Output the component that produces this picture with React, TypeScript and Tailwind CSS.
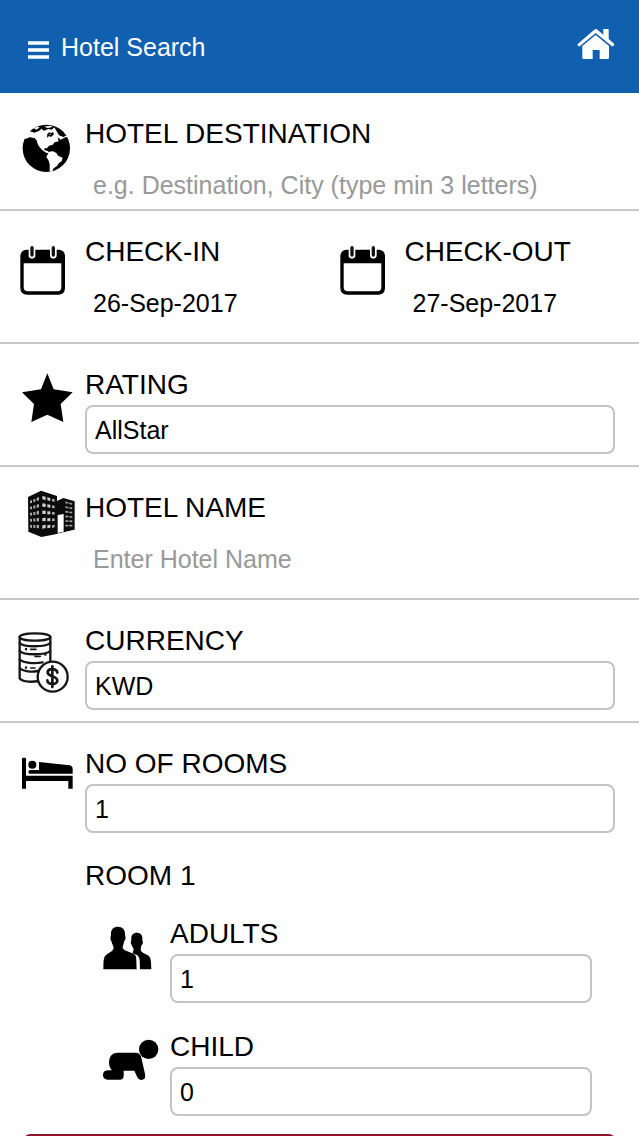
import { useState } from "react";
import type { ReactNode } from "react";

const labelClass = "block text-[28px] leading-[34px] text-black";
const plainInput =
  "mt-[10px] block h-12 w-full min-w-0 bg-transparent px-2 text-[25px] text-black outline-none placeholder:text-[#999999]";
const selectClass =
  "mt-[3px] block h-[49px] w-full appearance-none rounded-lg border-2 border-[#c4c4c8] bg-white px-2 pt-[2px] text-[25px] text-black outline-none";

function Icon({ viewBox, children }: { viewBox: string; children: ReactNode }) {
  return (
    <svg viewBox={viewBox} className="h-16 w-[60px] shrink-0 overflow-visible" aria-hidden="true">
      {children}
    </svg>
  );
}

function GlobeIcon() {
  return (
    <Icon viewBox="48 21 180 192">
      <circle cx="139" cy="115" r="71" fill="#000" />
      <g fill="#fefefe">
        <path d="M66 88L74 66L91 64L103 68L118 62L124 56L132 62L145 57L155 59L163 52L170 64L177 76L190 81L202 76L194 60L176 44L210 44L214 92L203 80L193 83L182 89L173 82L176 94L164 97L157 105L147 107L141 115L135 114L132 120L143 123L149 128L140 129L129 122L119 112L113 102L110 91L103 84L89 82L78 86Z" />
        <path d="M147 125L159 124L169 129L174 137L188 143L185 154L177 159L171 168L161 175L155 187L149 184L149 162L145 150L139 141Z" />
        <path d="M101 55L113 50L119 52L110 59Z" />
        <path d="M132 50L151 47L158 51L143 54Z" />
      </g>
      <path d="M142 72L148 67L154 70L158 65L162 73L153 81L147 78L141 83Z" fill="#000" />
      <path d="M148 72L153 72L149 76Z" fill="#fefefe" />
    </Icon>
  );
}

function CalendarIcon() {
  return (
    <Icon viewBox="48 15 180 192">
      <path
        fillRule="evenodd"
        d="M78 59H178Q195 62 195 79V173Q195 194 174 194H82Q61 194 61 173V79Q61 62 78 59ZM71 100V172Q71 184 84 184H172Q184 184 184 172V100Z"
      />
      {[96, 160].map((x) => (
        <g key={x} strokeLinecap="round">
          <path d={`M${x} 53V76`} stroke="#fefefe" strokeWidth="20" />
          <path d={`M${x} 53V75`} stroke="#111" strokeWidth="10" />
        </g>
      ))}
    </Icon>
  );
}

function StarIcon() {
  return (
    <Icon viewBox="48 24 180 192">
      <path d="M142 40L161 88L218 97L182 132L190 186L142 164L94 186L102 132L66 97L123 88Z" />
    </Icon>
  );
}

function BuildingIcon() {
  const rows = [0, 1, 2, 3, 4];
  return (
    <Icon viewBox="48 33 180 192">
      <path d="M84 51L123 32L171 48V63L190 54L224 64V149L170 162L124 171L85 155Z" fill="#0b0b0b" />
      <path d="M173 105L191 102V155L173 159Z" fill="#fefefe" />
      <path d="M170 162L224 149V154L170 166Z" fill="#fefefe" />
      {rows.map((r) => (
        <g key={r} fill="#a8a8a8">
          <path d={`M90 ${62 + r * 18}L96 ${60 + r * 19}V${69 + r * 19}L90 ${70 + r * 18}Z`} />
          <path d={`M100 ${58 + r * 19}L106 ${56 + r * 20}V${65 + r * 20}L100 ${67 + r * 19}Z`} />
          <path d={`M110 ${54 + r * 20}L117 ${51 + r * 21}V${61 + r * 21}L110 ${64 + r * 20}Z`} />
          <path d={`M127 ${48 + r * 22}L137 ${50 + r * 21}V${60 + r * 21}L127 ${58 + r * 22}Z`} fill="#cfcfcf" />
          <path d={`M142 ${52 + r * 21}L151 ${54 + r * 20}V${63 + r * 20}L142 ${61 + r * 21}Z`} fill="#cfcfcf" />
          <path d={`M156 ${56 + r * 20}L164 ${58 + r * 19}V${66 + r * 19}L156 ${64 + r * 20}Z`} />
        </g>
      ))}
      {[0, 1, 2, 3, 4, 5].map((r) => (
        <path
          key={r}
          d={`M196 ${67 + r * 14}L217 ${72 + r * 13}`}
          stroke="#a0a0a0"
          strokeWidth="5"
          strokeDasharray="9 3"
        />
      ))}
    </Icon>
  );
}

function CoinsIcon() {
  return (
    <Icon viewBox="48 12 180 192">
      <g fill="none" stroke="#161616" strokeWidth="7" strokeLinecap="round">
        <ellipse cx="105" cy="51" rx="46" ry="11" />
        <path d="M59 51V175C65 184 90 188 116 183M151 51V121" />
        <path d="M59 69C70 82 137 82 151 69M59 93C70 106 137 106 151 93M59 119C72 129 103 132 128 127M59 145C70 154 95 157 112 153" />
        <path d="M92 88H108M105 109H121M92 144H105" strokeWidth="5" />
        <path d="M78 87V88M136 103V104M78 142V143" />
        <circle cx="158" cy="170" r="45" fill="#fefefe" />
        <path d="M172 158C171 145 145 143 143 156C142 171 172 167 172 182C170 196 144 195 142 181M157 139V201" strokeWidth="8" />
      </g>
    </Icon>
  );
}

function BedIcon() {
  return (
    <Icon viewBox="48 21 180 192">
      <path d="M66 56Q66 53 69 53H75Q78 53 78 56V107H218V146H205V123H78V146H66Z" />
      <circle cx="97" cy="74" r="12" />
      <path d="M117 66L209 76Q218 78 218 87V101H90Q85 101 85 96Q85 90 91 90H117Z" />
    </Icon>
  );
}

function AdultsIcon() {
  return (
    <Icon viewBox="33 21 180 192">
      <path d="M63 73C62 57 72 50 84 50C97 50 106 58 105 74L107 85L102 96C101 104 98 108 98 114C103 125 127 126 136 136C140 142 139 160 140 178H40C41 160 39 145 46 137C56 127 69 125 71 114C70 107 66 102 65 96L61 86Z" />
      <path d="M124 89C123 74 130 68 140 68C151 68 159 75 157 90L159 99L154 107C152 115 152 120 153 123C159 132 174 133 179 141C184 150 183 164 184 178H150C149 159 151 145 144 138C139 132 130 133 128 129L131 118L126 107L122 98Z" />
    </Icon>
  );
}

function ChildIcon() {
  return (
    <Icon viewBox="33 12 180 192">
      <circle cx="176" cy="70" r="29" />
      <path d="M82 80H137Q149 80 153 91L165 144Q169 160 155 162Q146 163 142 154L133 134H101V149Q101 161 89 161H53Q39 160 39 147Q39 134 53 133H66Q57 124 57 108Q57 82 82 80Z" />
    </Icon>
  );
}

function Field({
  id,
  label,
  icon,
  className = "",
  children,
}: {
  id: string;
  label: string;
  icon: ReactNode;
  className?: string;
  children: ReactNode;
}) {
  return (
    <div className={`flex min-w-0 gap-[9px] ${className}`}>
      {icon}
      <div className="min-w-0 flex-1">
        <label htmlFor={id} className={labelClass}>
          {label}
        </label>
        {children}
      </div>
    </div>
  );
}

function Select({ id, options }: { id: string; options: string[] }) {
  const [value, setValue] = useState(options[0]);
  return (
    <select id={id} className={selectClass} value={value} onChange={(e) => setValue(e.target.value)}>
      {options.map((option) => (
        <option key={option}>{option}</option>
      ))}
    </select>
  );
}

const sectionClass = "border-b-2 border-[#c8c8c8] pt-6";
const fieldPad = "pl-4 pr-6";

export default function App() {
  return (
    <div className="flex h-screen flex-col bg-[#fefefe] font-['Liberation_Sans',Arial,sans-serif]">
      <header className="flex h-[93px] shrink-0 items-center justify-between bg-[#1160af] pr-6 pl-7 text-white">
        <div className="flex items-center gap-3">
          <button type="button" aria-label="Menu" className="pt-[6px]">
            <svg viewBox="0 0 21 18" className="h-[18px] w-[21px]" aria-hidden="true">
              <path d="M0 2H21M0 9H21M0 16H21" stroke="currentColor" strokeWidth="3.6" />
            </svg>
          </button>
          <h1 className="text-[25px] leading-8">Hotel Search</h1>
        </div>
        <a href="#home" aria-label="Home" className="pb-1">
          <svg viewBox="51 57 114 96" className="h-8 w-[38px]" fill="currentColor" aria-hidden="true">
            <path d="M107 57Q109 56 112 59L130 74V57H146V87L162 101Q164 105 160 108Q157 110 154 107L107 69L61 107Q57 110 54 107Q51 104 54 101L102 60Z" />
            <path d="M107 75L147 108V143Q147 147 143 147H119V120H98V147H71Q67 147 67 143V108Z" />
          </svg>
        </a>
      </header>

      <form
        className="min-h-0 flex-1 overflow-y-auto [scrollbar-width:none]"
        onSubmit={(e) => e.preventDefault()}
      >
        <section className={sectionClass}>
          <Field id="destination" label="HOTEL DESTINATION" icon={<GlobeIcon />} className={fieldPad}>
            <input
              id="destination"
              type="text"
              placeholder="e.g. Destination, City (type min 3 letters)"
              className={plainInput}
            />
          </Field>
        </section>

        <section className={`${sectionClass} grid grid-cols-2 pb-[15px]`}>
          <Field id="check-in" label="CHECK-IN" icon={<CalendarIcon />} className="pl-4">
            <input id="check-in" type="text" defaultValue="26-Sep-2017" className={plainInput} />
          </Field>
          <Field id="check-out" label="CHECK-OUT" icon={<CalendarIcon />} className="pl-4">
            <input id="check-out" type="text" defaultValue="27-Sep-2017" className={plainInput} />
          </Field>
        </section>

        <section className={`${sectionClass} pb-[11px]`}>
          <Field id="rating" label="RATING" icon={<StarIcon />} className={fieldPad}>
            <Select id="rating" options={["AllStar", "1 Star", "2 Star", "3 Star", "4 Star", "5 Star"]} />
          </Field>
        </section>

        <section className={`${sectionClass} pb-[15px]`}>
          <Field id="hotel-name" label="HOTEL NAME" icon={<BuildingIcon />} className={fieldPad}>
            <input id="hotel-name" type="text" placeholder="Enter Hotel Name" className={plainInput} />
          </Field>
        </section>

        <section className={`${sectionClass} pb-[11px]`}>
          <Field id="currency" label="CURRENCY" icon={<CoinsIcon />} className={fieldPad}>
            <Select id="currency" options={["KWD", "USD", "EUR", "GBP"]} />
          </Field>
        </section>

        <section className="pt-6">
          <Field id="rooms" label="NO OF ROOMS" icon={<BedIcon />} className={fieldPad}>
            <Select id="rooms" options={["1", "2", "3", "4"]} />
          </Field>
          <fieldset className="pr-[47px] pl-[85px]">
            <legend className="pt-[26px] text-[28px] leading-[34px] text-black">ROOM 1</legend>
            <Field id="adults" label="ADULTS" icon={<AdultsIcon />} className="pt-6 pl-4">
              <Select id="adults" options={["1", "2", "3", "4"]} />
            </Field>
            <Field id="child" label="CHILD" icon={<ChildIcon />} className="pt-[27px] pl-4">
              <Select id="child" options={["0", "1", "2", "3"]} />
            </Field>
          </fieldset>
        </section>

        <div className="px-6 pt-[18px] pb-6">
          <button
            type="submit"
            aria-label="Search"
            className="flex h-14 w-full items-center justify-center rounded-md border-2 border-[#8e1427] bg-[#a3152c] text-white"
          >
            <svg viewBox="0 0 24 24" className="h-6 w-6" fill="none" stroke="currentColor" strokeWidth="2.5" aria-hidden="true">
              <circle cx="10" cy="10" r="7" />
              <path d="M15 15L22 22" />
            </svg>
          </button>
        </div>
      </form>
    </div>
  );
}
